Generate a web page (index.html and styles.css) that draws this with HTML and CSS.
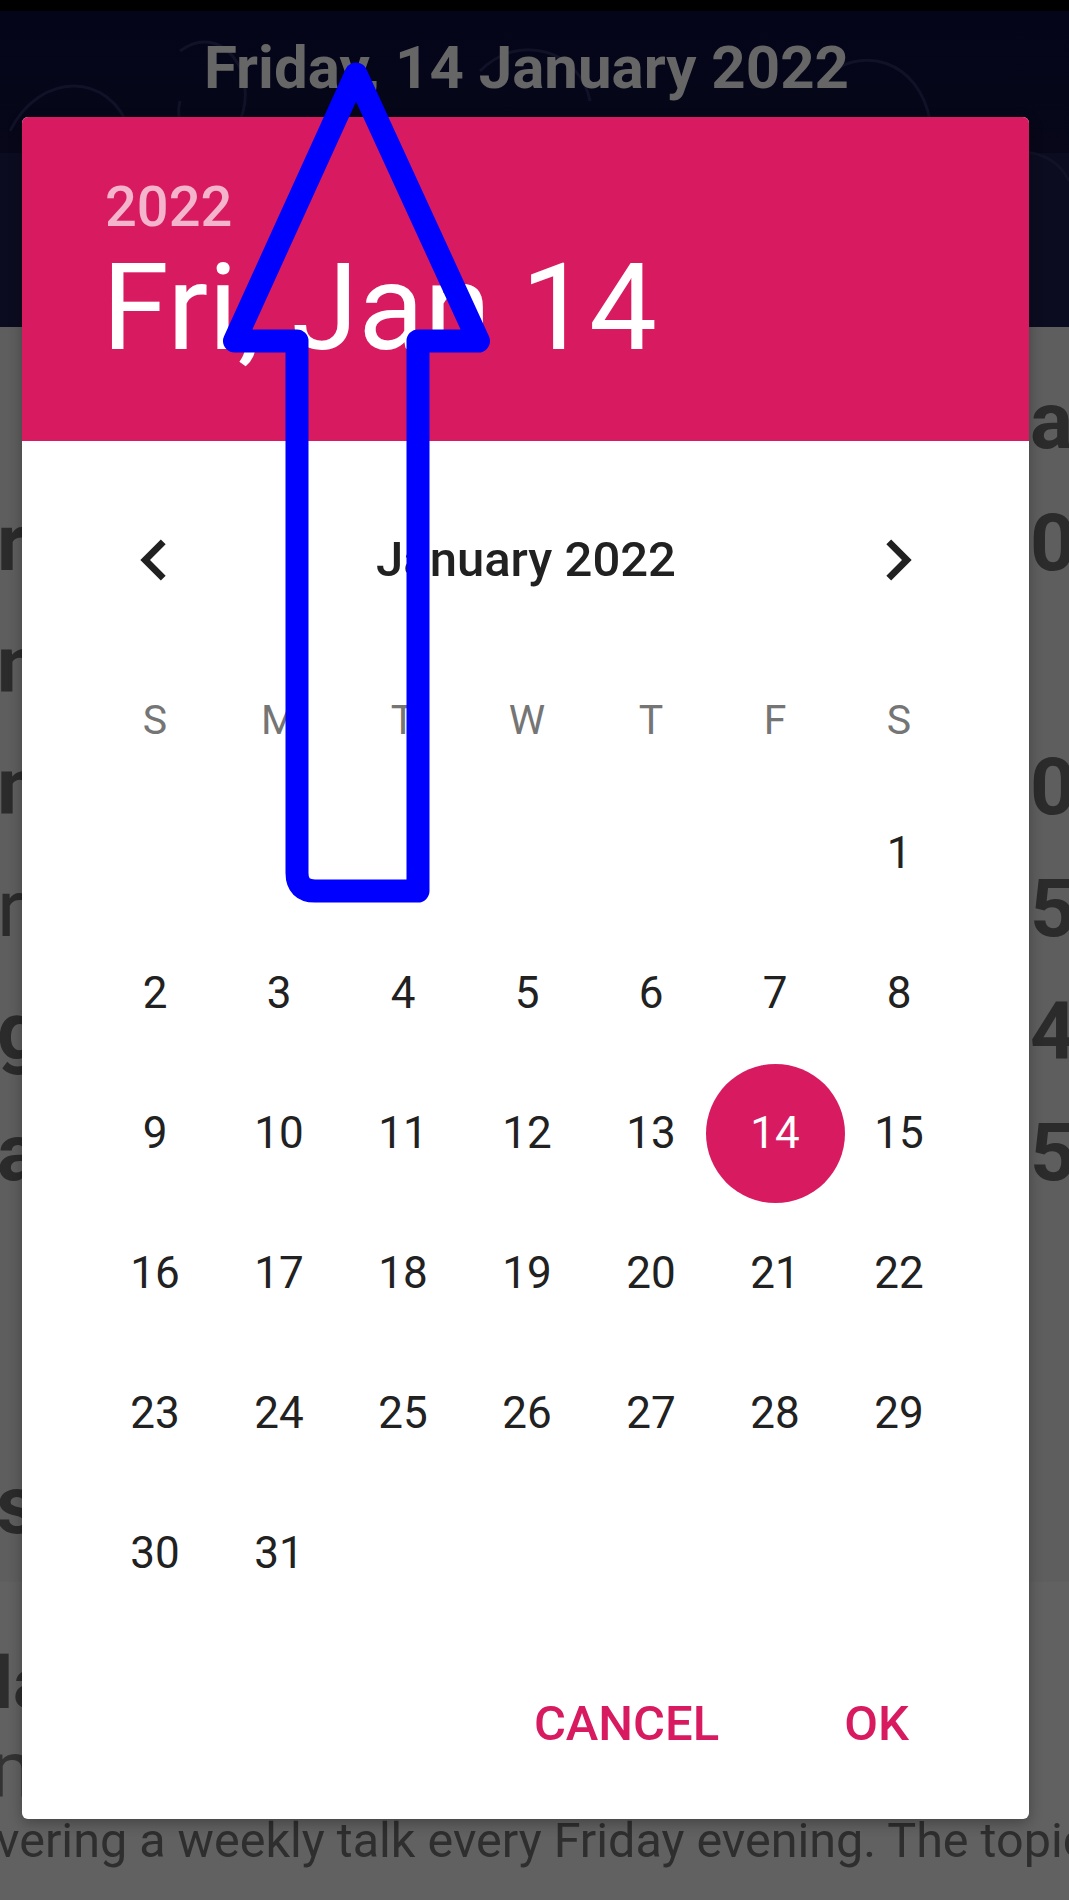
FILE: index.html
```html
<!DOCTYPE html>
<html>
<head>
<meta charset="utf-8">
<link rel="stylesheet" href="styles.css">
</head>
<body>
<div class="page">
  <div class="statusbar"></div>
  <div class="banner">
    <svg class="pattern" width="1069" height="316" viewBox="0 0 1069 316">
      <g fill="none" stroke="#111127" stroke-width="3">
        <path d="M10 120 C40 60 110 60 130 120 C150 180 80 200 60 160"/>
        <circle cx="70" cy="130" r="18"/>
        <path d="M180 40 C220 10 260 60 240 110 C220 150 170 130 180 90"/>
        <path d="M300 160 C320 110 380 100 400 150 C420 200 360 230 330 200"/>
        <circle cx="350" cy="170" r="14"/>
        <path d="M480 60 C520 20 580 40 590 90"/>
        <path d="M620 150 C650 100 720 100 740 160 C760 220 690 240 660 200"/>
        <circle cx="690" cy="170" r="16"/>
        <path d="M820 70 C860 30 920 50 930 110 C940 160 880 170 860 130"/>
        <path d="M960 180 C990 130 1050 130 1069 170"/>
        <path d="M120 250 C160 210 220 220 230 270"/>
        <path d="M520 250 C560 210 610 230 620 280"/>
        <path d="M880 260 C910 220 960 230 980 280"/>
      </g>
    </svg>
    <div class="banner-title">Friday, 14 January 2022</div>
  </div>
  <div class="content">
    <div class="row"><span class="l"></span><span class="r">at</span></div>
    <div class="row"><span class="l">r</span><span class="r">0</span></div>
    <div class="row"><span class="l">n</span><span class="r"></span></div>
    <div class="row"><span class="l">m</span><span class="r">0</span></div>
    <div class="row"><span class="l light">r</span><span class="r">5</span></div>
    <div class="row"><span class="l">g</span><span class="r">4</span></div>
    <div class="row"><span class="l">a</span><span class="r">5</span></div>
    <div class="section-head">s</div>
  </div>
  <div class="lower">
    <div class="lower-head">la</div>
    <div class="lower-sub">m</div>
    <div class="lower-text">vering a weekly talk every Friday evening. The topic</div>
  </div>

  <div class="dialog">
    <div class="dlg-header">
      <div class="dlg-year">2022</div>
      <div class="dlg-date">Fri, Jan 14</div>
    </div>
    <div class="nav">
      <svg class="chev" width="82" height="82" viewBox="0 0 24 24"><path fill="#212121" d="M15.41 7.41L14 6l-6 6 6 6 1.41-1.41L10.83 12z"/></svg>
      <div class="month">January 2022</div>
      <svg class="chev" width="82" height="82" viewBox="0 0 24 24"><path fill="#212121" d="M10 6L8.59 7.41 13.17 12l-4.58 4.59L10 18l6-6z"/></svg>
    </div>
    <div class="weekdays">
      <span>S</span><span>M</span><span>T</span><span>W</span><span>T</span><span>F</span><span>S</span>
    </div>
    <div class="days">
      <span></span><span></span><span></span><span></span><span></span><span></span><span>1</span>
      <span>2</span><span>3</span><span>4</span><span>5</span><span>6</span><span>7</span><span>8</span>
      <span>9</span><span>10</span><span>11</span><span>12</span><span>13</span><span class="sel"><b>14</b></span><span>15</span>
      <span>16</span><span>17</span><span>18</span><span>19</span><span>20</span><span>21</span><span>22</span>
      <span>23</span><span>24</span><span>25</span><span>26</span><span>27</span><span>28</span><span>29</span>
      <span>30</span><span>31</span>
    </div>
    <div class="actions">
      <span class="btn">CANCEL</span>
      <span class="btn">OK</span>
    </div>
  </div>

  <svg class="arrow" width="1069" height="1900" viewBox="0 0 1069 1900">
    <path d="M356 74 L234.5 341 L297 341 L297 873 Q297 891 315 891 L418 891 L418 341 L478.5 341 Z" fill="none" stroke="#0000ff" stroke-width="23" stroke-linejoin="round"/>
  </svg>
</div>
</body>
</html>
```

FILE: styles.css
```css
* { box-sizing: border-box; }
html, body { margin: 0; padding: 0; }
body {
  width: 1069px;
  height: 1900px;
  overflow: hidden;
  font-family: Roboto, "Noto Sans", "Liberation Sans", sans-serif;
  background: #626262;
}
.page {
  position: relative;
  width: 1069px;
  height: 1900px;
  overflow: hidden;
}
.statusbar {
  height: 11px;
  background: #000;
}
.banner {
  position: relative;
  height: 316px;
  background: linear-gradient(#05051a 0, #070719 142px, #0c0c20 142px, #0c0c20 100%);
  padding-top: 27px;
}
.pattern {
  position: absolute;
  left: 0;
  top: 0;
}
.banner-title {
  position: relative;
  font-size: 60px;
  line-height: 60px;
  font-weight: 700;
  color: #666666;
  text-align: center;
  padding-right: 16px;
  white-space: nowrap;
}
.content {
  height: 1255px;
  background: #5e5e5e;
  padding-top: 33px;
}
.row {
  display: flex;
  justify-content: space-between;
  height: 122px;
  line-height: 122px;
  font-size: 80px;
  font-weight: 700;
  color: #2b2b2b;
}
.row .l { margin-left: -3px; }
.row .l.light { font-weight: 400; }
.row .r { width: 39px; overflow: hidden; white-space: nowrap; }
.section-head {
  margin-top: 250px;
  font-size: 82px;
  line-height: 82px;
  font-weight: 700;
  color: #2b2b2b;
  margin-left: -4px;
}
.lower {
  height: 318px;
  background: #616161;
  padding-top: 62px;
  color: #2d2d2d;
}
.lower-head {
  font-size: 72px;
  line-height: 80px;
  font-weight: 700;
  margin-left: -6px;
}
.lower-sub {
  font-size: 80px;
  line-height: 92px;
  font-weight: 400;
  margin-left: -10px;
  color: #333;
}
.lower-text {
  font-size: 48.5px;
  line-height: 50px;
  white-space: nowrap;
  margin-left: -4px;
  color: #2e2e2e;
}

.dialog {
  position: absolute;
  left: 22px;
  top: 117px;
  width: 1007px;
  height: 1702px;
  background: #fff;
  border-radius: 6px;
  overflow: hidden;
  box-shadow: 0 4px 14px rgba(0,0,0,0.3);
}
.dlg-header {
  height: 324px;
  background: #d81b60;
  padding: 62px 0 0 80px;
}
.dlg-year {
  font-size: 56px;
  line-height: 56px;
  font-weight: 500;
  color: #f3b4cc;
  margin-left: 3px;
}
.dlg-date {
  margin-top: 13px;
  font-size: 121px;
  line-height: 120px;
  font-weight: 400;
  color: #fff;
  white-space: nowrap;
}
.nav {
  display: grid;
  grid-template-columns: 82px 1fr 82px;
  align-items: center;
  height: 140px;
  margin-top: 49px;
  padding: 0 90px 0 91px;
}
.chev { display: block; }
.month {
  text-align: center;
  font-size: 49px;
  line-height: 140px;
  font-weight: 500;
  color: #212121;
}
.weekdays {
  display: grid;
  grid-template-columns: repeat(7, 124px);
  margin: 27px 0 0 71px;
  height: 126px;
}
.weekdays span {
  text-align: center;
  font-size: 41px;
  line-height: 126px;
  color: #757575;
}
.days {
  display: grid;
  grid-template-columns: repeat(7, 124px);
  grid-auto-rows: 140px;
  margin-left: 71px;
}
.days span {
  display: flex;
  align-items: center;
  justify-content: center;
  font-size: 44px;
  line-height: 140px;
  color: #212121;
}
.days .sel b {
  flex: none;
  display: flex;
  align-items: center;
  justify-content: center;
  width: 139px;
  height: 139px;
  border-radius: 50%;
  background: #d81b60;
  color: #fff;
  font-weight: 400;
  line-height: 139px;
}
.actions {
  display: flex;
  justify-content: flex-end;
  gap: 45px;
  height: 140px;
  margin-top: 31px;
  padding-right: 80px;
}
.btn {
  padding: 0 40px;
  font-size: 49px;
  line-height: 140px;
  font-weight: 500;
  color: #d81b60;
}
.arrow {
  position: absolute;
  left: 0;
  top: 0;
  pointer-events: none;
}
```
